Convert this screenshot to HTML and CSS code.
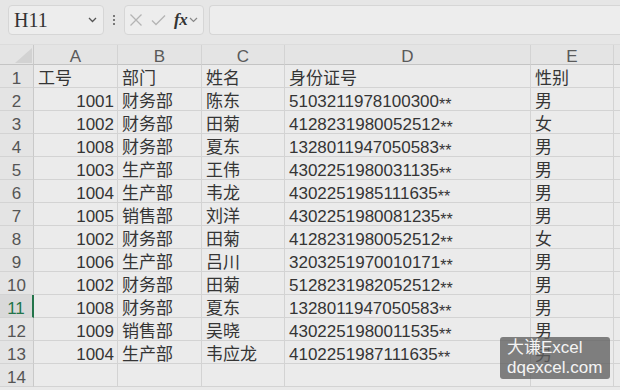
FILE: index.html
```html
<!DOCTYPE html>
<html lang="zh-CN">
<head>
<meta charset="utf-8">
<link rel="stylesheet" href="styles.css">
</head>
<body>
<div class="app">
  <div class="toolbar">
    <div class="namebox">
      <span class="ref">H11</span>
      <svg class="chev" width="9" height="6" viewBox="0 0 9 6"><path d="M1 1l3.5 3.5L8 1" fill="none" stroke="#555" stroke-width="1.3"/></svg>
    </div>
    <div class="dots"><i></i><i></i><i></i></div>
    <div class="fxbox">
      <svg width="14" height="14" viewBox="0 0 14 14"><path d="M1.5 1.5l11 11M12.5 1.5l-11 11" stroke="#b4b4b4" stroke-width="1.3" fill="none"/></svg>
      <svg width="15" height="12" viewBox="0 0 15 12"><path d="M1 6.5l4 4L14 1.5" stroke="#b4b4b4" stroke-width="1.3" fill="none"/></svg>
      <span class="fx">fx</span>
      <svg class="chev2" width="9" height="6" viewBox="0 0 9 6"><path d="M1 1l3.5 3.5L8 1" fill="none" stroke="#888" stroke-width="1.2"/></svg>
    </div>
    <div class="formula"></div>
  </div>
  <div class="sheet">
    <div class="corner"><span class="tri"></span></div>
    <div class="ch">A</div><div class="ch">B</div><div class="ch">C</div><div class="ch">D</div><div class="ch">E</div><div class="ch last"></div>

    <div class="rh">1</div><div class="c">工号</div><div class="c">部门</div><div class="c">姓名</div><div class="c">身份证号</div><div class="c">性别</div><div class="c last"></div>
    <div class="rh">2</div><div class="c n">1001</div><div class="c">财务部</div><div class="c">陈东</div><div class="c">5103211978100300<span class="ast">**</span></div><div class="c">男</div><div class="c last"></div>
    <div class="rh">3</div><div class="c n">1002</div><div class="c">财务部</div><div class="c">田菊</div><div class="c">4128231980052512<span class="ast">**</span></div><div class="c">女</div><div class="c last"></div>
    <div class="rh">4</div><div class="c n">1008</div><div class="c">财务部</div><div class="c">夏东</div><div class="c">1328011947050583<span class="ast">**</span></div><div class="c">男</div><div class="c last"></div>
    <div class="rh">5</div><div class="c n">1003</div><div class="c">生产部</div><div class="c">王伟</div><div class="c">4302251980031135<span class="ast">**</span></div><div class="c">男</div><div class="c last"></div>
    <div class="rh">6</div><div class="c n">1004</div><div class="c">生产部</div><div class="c">韦龙</div><div class="c">4302251985111635<span class="ast">**</span></div><div class="c">男</div><div class="c last"></div>
    <div class="rh">7</div><div class="c n">1005</div><div class="c">销售部</div><div class="c">刘洋</div><div class="c">4302251980081235<span class="ast">**</span></div><div class="c">男</div><div class="c last"></div>
    <div class="rh">8</div><div class="c n">1002</div><div class="c">财务部</div><div class="c">田菊</div><div class="c">4128231980052512<span class="ast">**</span></div><div class="c">女</div><div class="c last"></div>
    <div class="rh">9</div><div class="c n">1006</div><div class="c">生产部</div><div class="c">吕川</div><div class="c">3203251970010171<span class="ast">**</span></div><div class="c">男</div><div class="c last"></div>
    <div class="rh">10</div><div class="c n">1002</div><div class="c">财务部</div><div class="c">田菊</div><div class="c">5128231982052512<span class="ast">**</span></div><div class="c">男</div><div class="c last"></div>
    <div class="rh sel">11</div><div class="c n">1008</div><div class="c">财务部</div><div class="c">夏东</div><div class="c">1328011947050583<span class="ast">**</span></div><div class="c">男</div><div class="c last"></div>
    <div class="rh">12</div><div class="c n">1009</div><div class="c">销售部</div><div class="c">吴晓</div><div class="c">4302251980011535<span class="ast">**</span></div><div class="c">男</div><div class="c last"></div>
    <div class="rh">13</div><div class="c n">1004</div><div class="c">生产部</div><div class="c">韦应龙</div><div class="c">4102251987111635<span class="ast">**</span></div><div class="c">男</div><div class="c last"></div>
    <div class="rh">14</div><div class="c"></div><div class="c"></div><div class="c"></div><div class="c"></div><div class="c"></div><div class="c last"></div>
  </div>
  <div class="watermark">大谦Excel<br>dqexcel.com</div>
</div>
</body>
</html>
```

FILE: styles.css
```css
* { box-sizing: border-box; }
html, body { margin: 0; padding: 0; }
body {
  width: 620px;
  height: 390px;
  overflow: hidden;
  background: #e9e9e9;
  font-family: "Liberation Sans", "Noto Sans CJK SC", sans-serif;
  color: #353535;
}
.app { position: relative; width: 620px; height: 390px; }

.toolbar {
  display: flex;
  align-items: flex-start;
  height: 45px;
  padding: 5px 0 0 8px;
  background: #e6e6e6;
  border-bottom: 1px solid #dcdcdc;
}
.namebox {
  display: flex;
  align-items: center;
  width: 96px;
  height: 30px;
  padding: 0 6px 0 5px;
  background: #ededed;
  border: 1px solid #d6d6d6;
  border-radius: 4px;
}
.ref {
  font-family: "Liberation Serif", serif;
  font-size: 20px;
  color: #333;
  flex: 1;
  line-height: 1;
}
.dots {
  display: flex;
  flex-direction: column;
  align-items: center;
  justify-content: center;
  gap: 2px;
  width: 20px;
  height: 30px;
}
.dots i {
  width: 2px;
  height: 2px;
  background: #555;
  border-radius: 1px;
}
.fxbox {
  display: flex;
  align-items: center;
  gap: 8px;
  width: 80px;
  height: 30px;
  padding-left: 4px;
  background: #ededed;
  border: 1px solid #d6d6d6;
  border-radius: 4px;
}
.fx {
  font-family: "Liberation Serif", serif;
  font-style: italic;
  font-weight: bold;
  font-size: 17px;
  color: #333;
  letter-spacing: -0.5px;
}
.chev2 { margin-left: -6px; }
.formula {
  flex: 1;
  height: 30px;
  margin-left: 5px;
  background: #ededed;
  border: 1px solid #d6d6d6;
  border-right: none;
  border-radius: 4px 0 0 4px;
}

.sheet {
  display: grid;
  grid-template-columns: 34px 84px 84px 83px 246px 83px 1fr;
  grid-template-rows: 20px repeat(14, 23px);
  background: #ebebeb;
  font-size: 17px;
}
.corner {
  position: relative;
  background: #e4e4e4;
  border-right: 1px solid #c9c9c9;
  border-bottom: 1px solid #c4c4c4;
}
.tri {
  position: absolute;
  right: 1px;
  bottom: 1px;
  width: 0;
  height: 0;
  border-left: 17px solid transparent;
  border-bottom: 15px solid #d2d2d2;
}
.ch {
  text-align: center;
  background: #e4e4e4;
  border-right: 1px solid #d3d3d3;
  border-bottom: 1px solid #c4c4c4;
  color: #5a5a5a;
  line-height: 20px;
  padding-top: 2px;
}
.rh {
  text-align: center;
  padding-top: 4px;
  background: #e4e4e4;
  border-right: 1px solid #c9c9c9;
  border-bottom: 1px solid #d3d3d3;
  color: #555;
  line-height: 20px;
}
.rh.sel {
  background: #d9d9d9;
  color: #23744a;
  border-right: 2px solid #23744a;
}
.c {
  padding: 4px 3px 0 4px;
  border-right: 1px solid #d3d3d3;
  border-bottom: 1px solid #d3d3d3;
  line-height: 20px;
  white-space: nowrap;
}
.c.n { text-align: right; }
.last { border-right: none; }
.ast { vertical-align: -3px; font-size: 16px; line-height: 0; }

.watermark {
  position: absolute;
  left: 500px;
  top: 337px;
  width: 110px;
  height: 42px;
  padding: 1px 0 0 7px;
  background: rgba(95, 95, 95, 0.78);
  border-radius: 3px;
  color: #f4f4f4;
  font-size: 17px;
  line-height: 20px;
}
```
